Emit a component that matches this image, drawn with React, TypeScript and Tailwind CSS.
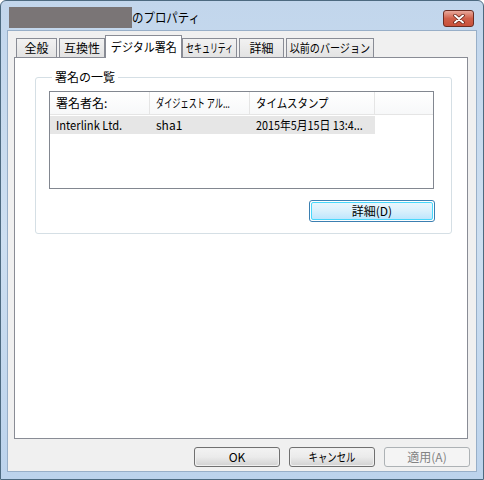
import React from "react";

const font = { fontFamily: '"Noto Sans CJK JP", "Liberation Sans", sans-serif' };

// Narrow the wide CJK glyphs toward the proportional width of the original UI font
function Sq({ children, s = "scale-x-100", o = "origin-center" }: { children: React.ReactNode; s?: string; o?: string }) {
  return <span className={`inline-block whitespace-nowrap ${s} ${o}`}>{children}</span>;
}

function Tab({ label, active = false, w, s }: { label: string; active?: boolean; w: string; s?: string }) {
  if (active) {
    return (
      <div
        className={`${w} h-[23px] -mb-px z-10 bg-white border border-[#898c95] border-b-0 flex items-center justify-center text-[12px] leading-none text-black whitespace-nowrap`}
      >
        <Sq s={s}>{label}</Sq>
      </div>
    );
  }
  return (
    <div
      className={`${w} h-[19px] bg-gradient-to-b from-[#f2f2f2] to-[#e3e3e3] border border-[#898c95] border-b-0 flex items-center justify-center text-[12px] leading-none text-black whitespace-nowrap`}
    >
      <Sq s={s}>{label}</Sq>
    </div>
  );
}

function Button({ label, kind = "normal", w, s }: { label: string; kind?: "normal" | "default" | "disabled"; w: string; s?: string }) {
  if (kind === "disabled") {
    return (
      <div className={`${w} h-[20px] rounded-[3px] border border-[#adb2b5] bg-[#f4f4f4] flex items-center justify-center text-[12px] leading-none text-[#838383]`}>
        <Sq s={s}>{label}</Sq>
      </div>
    );
  }
  if (kind === "default") {
    return (
      <div className={`${w} h-[22px] rounded-[3px] border border-[#3c7fb1] p-px`}>
        <div className="h-full rounded-[2px] border border-[#48d8fb] bg-gradient-to-b from-[#eaf6fd] via-[#d9f0fc] to-[#bee6fd] flex items-center justify-center text-[12px] leading-none text-black">
          <Sq s={s}>{label}</Sq>
        </div>
      </div>
    );
  }
  return (
    <div className={`${w} h-[20px] rounded-[3px] border border-[#707070] p-px`}>
      <div className="h-full rounded-[2px] bg-gradient-to-b from-[#f2f2f2] via-[#ebebeb] to-[#d4d4d4] flex items-center justify-center text-[12px] leading-none text-black">
        <Sq s={s}>{label}</Sq>
      </div>
    </div>
  );
}

export default function App() {
  return (
    <div className="w-[484px] h-[480px] bg-white" style={font}>
      <div className="w-[484px] h-[480px] rounded-t-[6px] border border-[#4d6a80] bg-gradient-to-b from-[#c2d6ec] via-[#cddff1] to-[#bcd3ec] flex flex-col">
        {/* Title bar */}
        <div className="h-[29px] flex items-start pl-[8px] pr-[9px]">
          <div className="mt-[6px] w-[123px] h-[21px] bg-[#7a7576]" />
          <div className="mt-[9px] text-[13px] leading-none text-black">
            <Sq s="scale-x-[0.88]" o="origin-left">のプロパティ</Sq>
          </div>
          <div className="ml-auto mt-[9px] w-[31px] h-[17px] rounded-[3px] border border-[#6b2c22] bg-gradient-to-b from-[#e8a99c] via-[#d0604a] to-[#c8503a] flex items-center justify-center">
            <svg width="12" height="10" viewBox="0 0 12 10">
              <path d="M2 1.5 L10 8.5 M10 1.5 L2 8.5" stroke="#5a1a10" strokeWidth="3.4" strokeLinecap="round" />
              <path d="M2 1.5 L10 8.5 M10 1.5 L2 8.5" stroke="#ffffff" strokeWidth="2" strokeLinecap="round" />
            </svg>
          </div>
        </div>

        {/* Client area */}
        <div className="mx-[6px] mb-[7px] flex-1 bg-[#f0f0f0] border border-[#98afc8] flex flex-col px-[6px] pt-[3px]">
          {/* Tabs */}
          <div className="flex items-end h-[23px] pl-[2px]">
            <Tab label="全般" w="w-[41px]" />
            <div className="w-[2px]" />
            <Tab label="互換性" w="w-[46px]" />
            <Tab label="デジタル署名" active w="w-[77px]" s="scale-x-[0.92]" />
            <Tab label="セキュリティ" w="w-[55px]" s="scale-x-[0.66]" />
            <div className="w-[2px]" />
            <Tab label="詳細" w="w-[45px]" />
            <div className="w-[2px]" />
            <Tab label="以前のバージョン" w="w-[88px]" s="scale-x-[0.84]" />
          </div>

          {/* Tab panel */}
          <div className="h-[382px] w-[454px] bg-white border border-[#898c95] pt-[13px] pl-[20px]">
            <fieldset className="w-[417px] h-[163px] border border-[#d5dfe5] rounded-[3px] px-[13px] pt-[8px]">
              <legend className="ml-[3px] px-[3px] text-[12px] leading-none text-black">署名の一覧</legend>
              <div className="w-[385px] h-[98px] border border-[#828790] bg-white flex flex-col">
                {/* Header */}
                <div className="h-[23px] flex text-[12px] leading-none text-black bg-gradient-to-b from-white to-[#f7f8f9] border-b border-[#e5e5e5]">
                  <div className="w-[100px] flex items-center pl-[6px] border-r border-[#e5e5e5]">署名者名:</div>
                  <div className="w-[100px] flex items-center pl-[6px] border-r border-[#e5e5e5]">
                    <Sq s="scale-x-[0.68]" o="origin-left">ダイジェスト アル...</Sq>
                  </div>
                  <div className="w-[125px] flex items-center pl-[6px] border-r border-[#e5e5e5]">
                    <Sq s="scale-x-[0.87]" o="origin-left">タイムスタンプ</Sq>
                  </div>
                  <div className="flex-1" />
                </div>
                {/* Row */}
                <div className="mt-[1px] h-[18px] w-[325px] bg-[#e6e6e6] flex text-[12px] leading-none text-black">
                  <div className="w-[100px] flex items-center pl-[6px]">
                    <Sq s="scale-x-[0.93]" o="origin-left">Interlink Ltd.</Sq>
                  </div>
                  <div className="w-[100px] flex items-center pl-[6px]">sha1</div>
                  <div className="w-[125px] flex items-center pl-[6px]">
                    <Sq s="scale-x-[0.9]" o="origin-left">2015年5月15日 13:4...</Sq>
                  </div>
                </div>
              </div>
              <div className="flex justify-end mt-[11px] pr-[3px]">
                <Button label="詳細(D)" kind="default" w="w-[126px]" />
              </div>
            </fieldset>
          </div>

          {/* Bottom buttons */}
          <div className="flex justify-end gap-[9px] mt-[8px]">
            <Button label="OK" w="w-[86px]" />
            <Button label="キャンセル" w="w-[86px]" s="scale-x-[0.78]" />
            <Button label="適用(A)" kind="disabled" w="w-[86px]" />
          </div>
        </div>
      </div>
    </div>
  );
}
